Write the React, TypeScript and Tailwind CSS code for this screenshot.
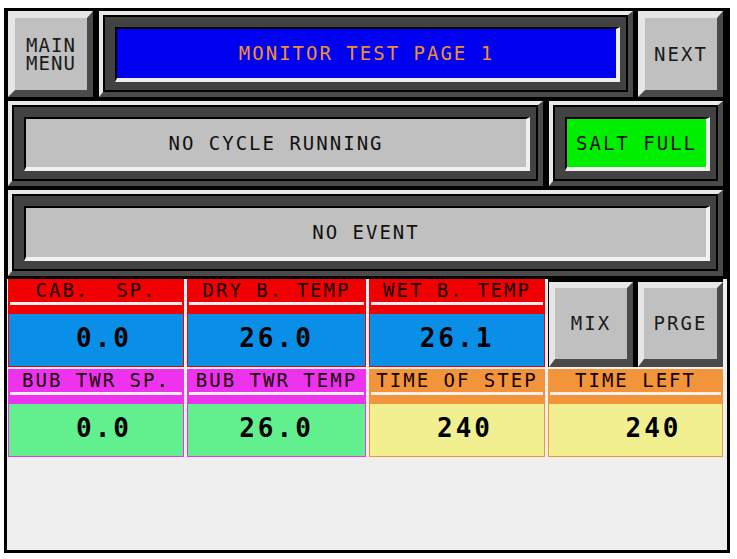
import type { ReactNode } from "react";

const mono = "font-['DejaVu_Sans_Mono',_'Liberation_Mono',_monospace]";

function Button({ label, wide }: { label: ReactNode; wide?: boolean }) {
  return (
    <div
      className={`flex h-full items-center justify-center border-t-[7px] border-l-[7px] border-r-[6px] border-b-[7px] border-t-[#e6e6e6] border-l-[#e6e6e6] border-r-[#4a4a4a] border-b-[#4a4a4a] bg-[#c0c0c0] text-center text-[#1a1a1a] ${
        wide ? "w-[85px]" : "w-[84px]"
      }`}
    >
      {label}
    </div>
  );
}

function Panel({
  children,
  display,
  className,
}: {
  children: ReactNode;
  display: string;
  className: string;
}) {
  return (
    <div
      className={`h-full border-t-[4px] border-l-[4px] border-r-[5px] border-b-[5px] border-t-[#e8e8e8] border-l-[#e8e8e8] border-r-[#4a4a4a] border-b-[#4a4a4a] bg-[#424242] ${className}`}
    >
      <div className="h-full border-[2px] border-black bg-[#424242] pt-[10px] pl-[10px] pr-[6px] pb-[8px]">
        <div
          className={`flex h-full items-center justify-center border-t-[2px] border-l-[2px] border-r-[4px] border-b-[4px] border-t-black border-l-black border-r-[#f0f0f0] border-b-[#f0f0f0] ${display}`}
        >
          {children}
        </div>
      </div>
    </div>
  );
}

const cells = [
  { label: "CAB.  SP.", value: "0.0", head: "bg-[#f00000]", box: "bg-[#0a8fe8]", shift: "pl-[16px]" },
  { label: "DRY B. TEMP", value: "26.0", head: "bg-[#f00000]", box: "bg-[#0a8fe8]", shift: "pl-0" },
  { label: "WET B. TEMP", value: "26.1", head: "bg-[#f00000]", box: "bg-[#0a8fe8]", shift: "pl-0" },
  { label: "BUB TWR SP.", value: "0.0", head: "bg-[#ee33ee]", box: "bg-[#62f08f]", shift: "pl-[16px]" },
  { label: "BUB TWR TEMP", value: "26.0", head: "bg-[#ee33ee]", box: "bg-[#62f08f]", shift: "pl-0" },
  { label: "TIME OF STEP", value: "240", head: "bg-[#f2953a]", box: "bg-[#f1ef8f]", shift: "pl-[16px]" },
  { label: "TIME LEFT", value: "240", head: "bg-[#f2953a]", box: "bg-[#f1ef8f]", shift: "pl-[36px]" },
];

function Cell({ c }: { c: (typeof cells)[number] }) {
  return (
    <div className={`flex h-[88px] flex-col ${c.head}`}>
      <div className="flex h-[23px] items-center justify-center whitespace-pre text-[19px] tracking-[2px] text-[#140000]">
        {c.label}
      </div>
      <div className="mx-[2px] h-[3px] bg-[#f4eeee]" />
      <div className="h-[9px]" />
      <div
        className={`mx-[1px] mb-[1px] flex flex-1 items-center justify-center text-[26px] font-bold tracking-[3px] text-black ${c.box} ${c.shift}`}
      >
        <span className="-mt-[4px]">{c.value}</span>
      </div>
    </div>
  );
}

export default function App() {
  return (
    <div className={`min-h-[559px] bg-white pt-[8px] pl-[4px] ${mono}`}>
      <div className="flex h-[545px] w-[726px] flex-col border-[3px] border-black bg-[#efefef]">
        {/* top panels */}
        <div className="flex flex-col gap-[4px] bg-black pl-[1px] pr-[4px] pb-[3px]">
          <div className="flex h-[86px] gap-[5px]">
            <Button
              wide
              label={
                <div className="flex flex-col text-[19px] tracking-[1px]">
                  <span className="h-[18px] leading-[18px]">MAIN</span>
                  <span className="h-[18px] leading-[18px]">MENU</span>
                </div>
              }
            />
            <Panel className="ml-[1px] w-[534px]" display="bg-[#0000f0]">
              <span className="text-[19px] tracking-[2px] text-[#f0902c]">MONITOR TEST PAGE 1</span>
            </Panel>
            <Button wide label={<span className="text-[19px] tracking-[2px]">NEXT</span>} />
          </div>
          <div className="flex h-[85px] gap-[6px]">
            <Panel className="w-[535px]" display="bg-[#c0c0c0]">
              <span className="text-[19px] tracking-[2px] text-[#111]">NO CYCLE RUNNING</span>
            </Panel>
            <Panel className="w-[174px]" display="bg-[#00ee00]">
              <span className="text-[19px] tracking-[2px] text-[#111]">SALT FULL</span>
            </Panel>
          </div>
          <div className="flex h-[86px]">
            <Panel className="w-[715px]" display="bg-[#c0c0c0]">
              <span className="text-[19px] tracking-[2px] text-[#111]">NO EVENT</span>
            </Panel>
          </div>
        </div>

        {/* data cells */}
        <div className="grid grid-cols-[176px_179px_176px_175px] gap-x-[3px] gap-y-[2px] pl-[1px] pr-[4px]">
          <Cell c={cells[0]} />
          <Cell c={cells[1]} />
          <Cell c={cells[2]} />
          <div className="flex h-[88px] gap-[5px] bg-black pt-[3px] pl-[1px]">
            <div className="flex w-[84px] items-center justify-center border-t-[6px] border-l-[6px] border-r-[6px] border-b-[8px] border-t-[#e6e6e6] border-l-[#e6e6e6] border-r-[#4a4a4a] border-b-[#4a4a4a] bg-[#c0c0c0] text-[19px] tracking-[2px] text-[#1a1a1a]">
              MIX
            </div>
            <div className="flex w-[85px] items-center justify-center border-t-[6px] border-l-[6px] border-r-[6px] border-b-[8px] border-t-[#e6e6e6] border-l-[#e6e6e6] border-r-[#4a4a4a] border-b-[#4a4a4a] bg-[#c0c0c0] text-[19px] tracking-[2px] text-[#1a1a1a]">
              PRGE
            </div>
          </div>
          <Cell c={cells[3]} />
          <Cell c={cells[4]} />
          <Cell c={cells[5]} />
          <Cell c={cells[6]} />
        </div>
      </div>
    </div>
  );
}
